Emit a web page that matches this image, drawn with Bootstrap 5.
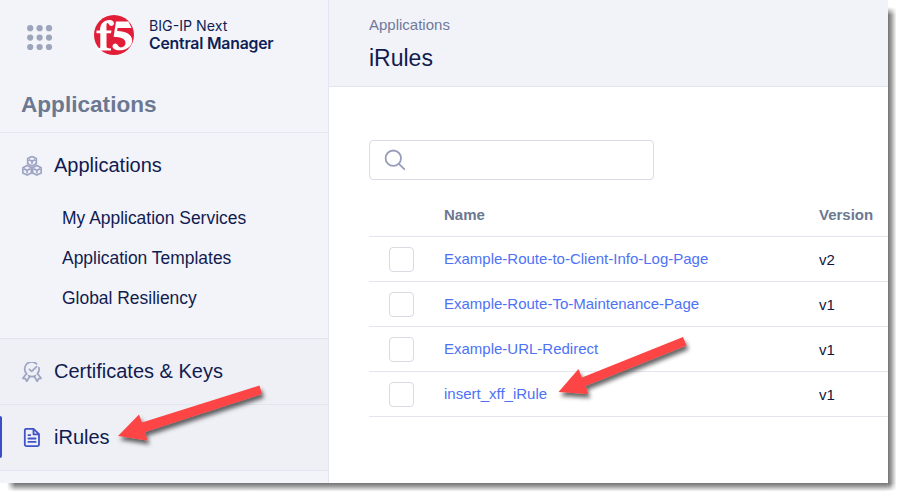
<!DOCTYPE html>
<html lang="en">
<head>
<meta charset="utf-8">
<title>iRules</title>
<link href="https://cdn.jsdelivr.net/npm/bootstrap@5.3.0/dist/css/bootstrap.min.css" rel="stylesheet">
<style>
body{font-family:"Liberation Sans",Arial,sans-serif;background:#fff;color:#111b50;width:903px;height:498px;overflow:hidden}
.app-window{width:888px;height:483px}
.side-pane{width:329px;background:#f3f4f9;border-right:1px solid #e2e5f2;overflow:hidden}
.brand-bar{height:76px;padding-left:27px}
.grid-dots{margin-top:25px}
.brand-mark{margin:15px 0 0 41px}
.brand-name{font-family:Inter,sans-serif;font-size:14.2px;line-height:18px;color:#0f1e57;margin:17px 0 0 15px}
.brand-name strong{font-weight:600;font-size:15.8px;letter-spacing:-.2px}
.side-title{height:57px;padding:1px 0 0 21px;font-size:22.6px;color:#6c7891;border-bottom:1px solid #e5e8f2}
.side-link{height:65px;padding-left:22px;font-size:20px;color:#111b50}
.side-link svg{margin-right:12px}
.side-link span{margin-top:-2px}
.side-group{border-bottom:1px solid #e3e5f1}
.side-group.first{height:206px}
.side-group.solo{background:#eff0f6}
.sub-link{height:40px;padding-left:62px;font-size:17.45px;color:#111b50}
.active-bar{left:0;top:11px;width:2px;height:42px;background:#3b4ec4;border-radius:0 2px 2px 0}
.page-head{height:87px;padding:16px 0 0 40px;background:#f2f3f9;border-bottom:1px solid #dfe4f2}
.crumb{font-size:15px;line-height:18px;color:#70799b}
.page-title{font-size:23px;line-height:28px;margin-top:10px}
.search-box{width:285px;height:40px;margin:53px 0 0 40px;padding-left:14px;border:1px solid #d9dbe5;border-radius:4px}
.rules{margin:14px 0 0 40px;width:519px;font-size:15px}
.rule-row{height:45px;border-bottom:1px solid #e5e6ed}
.rule-row.heads{height:43px;color:#6c7891;font-weight:bold}
.pick{width:75px;padding-left:20px}
.pick .form-check-input{width:25px;height:25px;border:1px solid #d9dbe3;border-radius:4px}
.rule-name{width:375px}
.rule-name a{color:#4d72f5}
.version{padding-top:2px;color:#101640}
.shade-right{left:888px;top:7px;width:8px;height:484px;background:linear-gradient(90deg,#747474,#969696 35%,#d2d2d2 75%,#f5f5f5);-webkit-mask-image:linear-gradient(transparent,#000 8px,#000 476px,transparent)}
.shade-bottom{left:7px;top:483px;width:885px;height:8px;background:linear-gradient(#747474,#969696 35%,#d2d2d2 75%,#f5f5f5);-webkit-mask-image:linear-gradient(90deg,transparent,#000 8px,#000 880px,transparent)}
.arrows{left:0;top:0;pointer-events:none}
</style>
<script src="https://cdn.jsdelivr.net/npm/bootstrap@5.3.0/dist/js/bootstrap.bundle.min.js"></script>
</head>
<body class="position-relative">
<div class="app-window d-flex">
  <nav class="side-pane flex-shrink-0">
    <div class="brand-bar d-flex align-items-start">
      <svg class="grid-dots" width="26" height="26" viewBox="0 0 26 26" fill="#9ca5bb"><circle cx="3.2" cy="3.2" r="3.1"/><circle cx="12.6" cy="3.2" r="3.1"/><circle cx="22" cy="3.2" r="3.1"/><circle cx="3.2" cy="12.6" r="3.1"/><circle cx="12.6" cy="12.6" r="3.1"/><circle cx="22" cy="12.6" r="3.1"/><circle cx="3.2" cy="22" r="3.1"/><circle cx="12.6" cy="22" r="3.1"/><circle cx="22" cy="22" r="3.1"/></svg>
      <svg class="brand-mark" width="40" height="40" viewBox="0 0 40 40"><circle cx="20" cy="20" r="20" fill="#e21d38"/><g fill="#fff"><path d="M2.500 15.500H6C6 8.500 10 5 15.500 5C18.300 5 20 6.300 20 8.200C20 9.800 18.800 11 17.200 11C15.200 11 14.800 8 13.500 8C12.300 8 12.500 10 12.500 15.500H17.500L17 18.300H12.500V31.500C12.500 33 14.300 33 17 33.500V35.500H4V33.500C6 33 6.300 33 6.300 31.500V18.300H2.500Z"/><path d="M22 6.500H34.500L37.500 13H23.500L23.200 16C32 16.200 38.200 19.500 38.200 25.500C38.200 32.500 30 36 23.500 35.200C20.500 34.800 18.500 33.300 18.500 31.300C18.500 29.600 19.700 28.500 21.400 28.500C23.800 28.500 24.200 32.500 27 32.500C29.800 32.500 31.500 30.500 31.500 27.800C31.500 23.800 27.500 22 19.600 21.700Z"/></g></svg>
      <div class="brand-name"><div>BIG-IP Next</div><strong class="d-block">Central Manager</strong></div>
    </div>
    <h1 class="side-title d-flex align-items-center fw-bold mb-0">Applications</h1>
    <div class="side-group first">
      <a class="side-link d-flex align-items-center text-decoration-none" href="#">
        <svg width="20" height="20" viewBox="0 0.500 20 20" fill="none" stroke="#9da4c3" stroke-width="1.7" stroke-linejoin="round"><path id="cube" d="M10 .9L14.300 3V8.300L10 10.400L5.700 8.300V3ZM6.800 4.200L10 5.600L13.200 4.200M10 5.600V8.600"/><use href="#cube" x="-4.900" y="9.200"/><use href="#cube" x="4.900" y="9.200"/></svg>
        <span>Applications</span></a>
      <a class="sub-link d-flex align-items-center text-decoration-none" href="#">My Application Services</a>
      <a class="sub-link d-flex align-items-center text-decoration-none" href="#">Application Templates</a>
      <a class="sub-link d-flex align-items-center text-decoration-none" href="#">Global Resiliency</a>
    </div>
    <div class="side-group solo">
      <a class="side-link d-flex align-items-center text-decoration-none" href="#">
        <svg width="20" height="20" viewBox="0 0.300 20 20" fill="none" stroke="#9da4c3" stroke-width="1.7" stroke-linejoin="round" stroke-linecap="round"><path d="M4.700 12.200A7 7 0 0 1 14.600 2.300M16.900 5.900A7 7 0 0 1 15.300 12.200M7.400 7.600L9.700 9.700L14.600 4.900M6.600 14Q10 15.700 13.400 14M4 12.600L.9 16.600L3.400 17L4.800 19.600L7.800 14.800M16 12.600L19.100 16.600L16.600 17L15.200 19.600L12.200 14.800"/></svg>
        <span>Certificates &amp; Keys</span></a>
    </div>
    <div class="side-group solo position-relative">
      <span class="active-bar position-absolute"></span>
      <a class="side-link d-flex align-items-center text-decoration-none" href="#">
        <svg width="20" height="20" viewBox="0 0.500 20 20" fill="none" stroke="#4054c8" stroke-width="1.8" stroke-linejoin="round" stroke-linecap="round"><path d="M4.500 1.300H11.500L17 6.600V17A1.700 1.700 0 0 1 15.300 18.700H4.500A1.700 1.700 0 0 1 2.800 17V3A1.700 1.700 0 0 1 4.500 1.300ZM11.500 1.500V6.800H16.800M6.400 7.600H8.300M6.400 11H13.600M6.400 14.400H13.600"/></svg>
        <span>iRules</span></a>
    </div>
  </nav>
  <main class="flex-grow-1">
    <header class="page-head"><div class="crumb">Applications</div><h2 class="page-title fw-normal mb-0">iRules</h2></header>
    <div class="search-box d-flex align-items-center">
      <svg width="22" height="22" viewBox="0 0 22 22" fill="none" stroke="#989eb9" stroke-width="1.8" stroke-linecap="round"><circle cx="9.300" cy="9.200" r="7.700"/><path d="M14.900 14.800L20.300 20.200"/></svg>
    </div>
    <div class="rules">
      <div class="rule-row heads d-flex align-items-center"><div class="pick"></div><div class="rule-name">Name</div><div>Version</div></div>
      <div class="rule-row d-flex align-items-center"><div class="pick d-flex"><input class="form-check-input m-0" type="checkbox" aria-label="Select"></div><div class="rule-name"><a class="text-decoration-none" href="#">Example-Route-to-Client-Info-Log-Page</a></div><div class="version">v2</div></div>
      <div class="rule-row d-flex align-items-center"><div class="pick d-flex"><input class="form-check-input m-0" type="checkbox" aria-label="Select"></div><div class="rule-name"><a class="text-decoration-none" href="#">Example-Route-To-Maintenance-Page</a></div><div class="version">v1</div></div>
      <div class="rule-row d-flex align-items-center"><div class="pick d-flex"><input class="form-check-input m-0" type="checkbox" aria-label="Select"></div><div class="rule-name"><a class="text-decoration-none" href="#">Example-URL-Redirect</a></div><div class="version">v1</div></div>
      <div class="rule-row d-flex align-items-center"><div class="pick d-flex"><input class="form-check-input m-0" type="checkbox" aria-label="Select"></div><div class="rule-name"><a class="text-decoration-none" href="#">insert_xff_iRule</a></div><div class="version">v1</div></div>
    </div>
  </main>
</div>
<div class="shade-right position-absolute"></div>
<div class="shade-bottom position-absolute"></div>
<svg class="arrows position-absolute" width="903" height="498" viewBox="0 0 903 498" fill="#fd4545">
  <defs><filter id="drop" x="-10%" y="-20%" width="125%" height="150%"><feDropShadow dx="2" dy="4" stdDeviation="2.2" flood-color="#000" flood-opacity=".6"/></filter></defs>
  <path filter="url(#drop)" d="M118 436L139 414.500L142 422.500L259.500 385.500L262 394L145 432L147.500 440.500Z"/>
  <path filter="url(#drop)" d="M558.500 392L578.500 369L582 377.500L683 337L686.500 345.500L585.500 386L588.500 394Z"/>
</svg>
</body>
</html>
